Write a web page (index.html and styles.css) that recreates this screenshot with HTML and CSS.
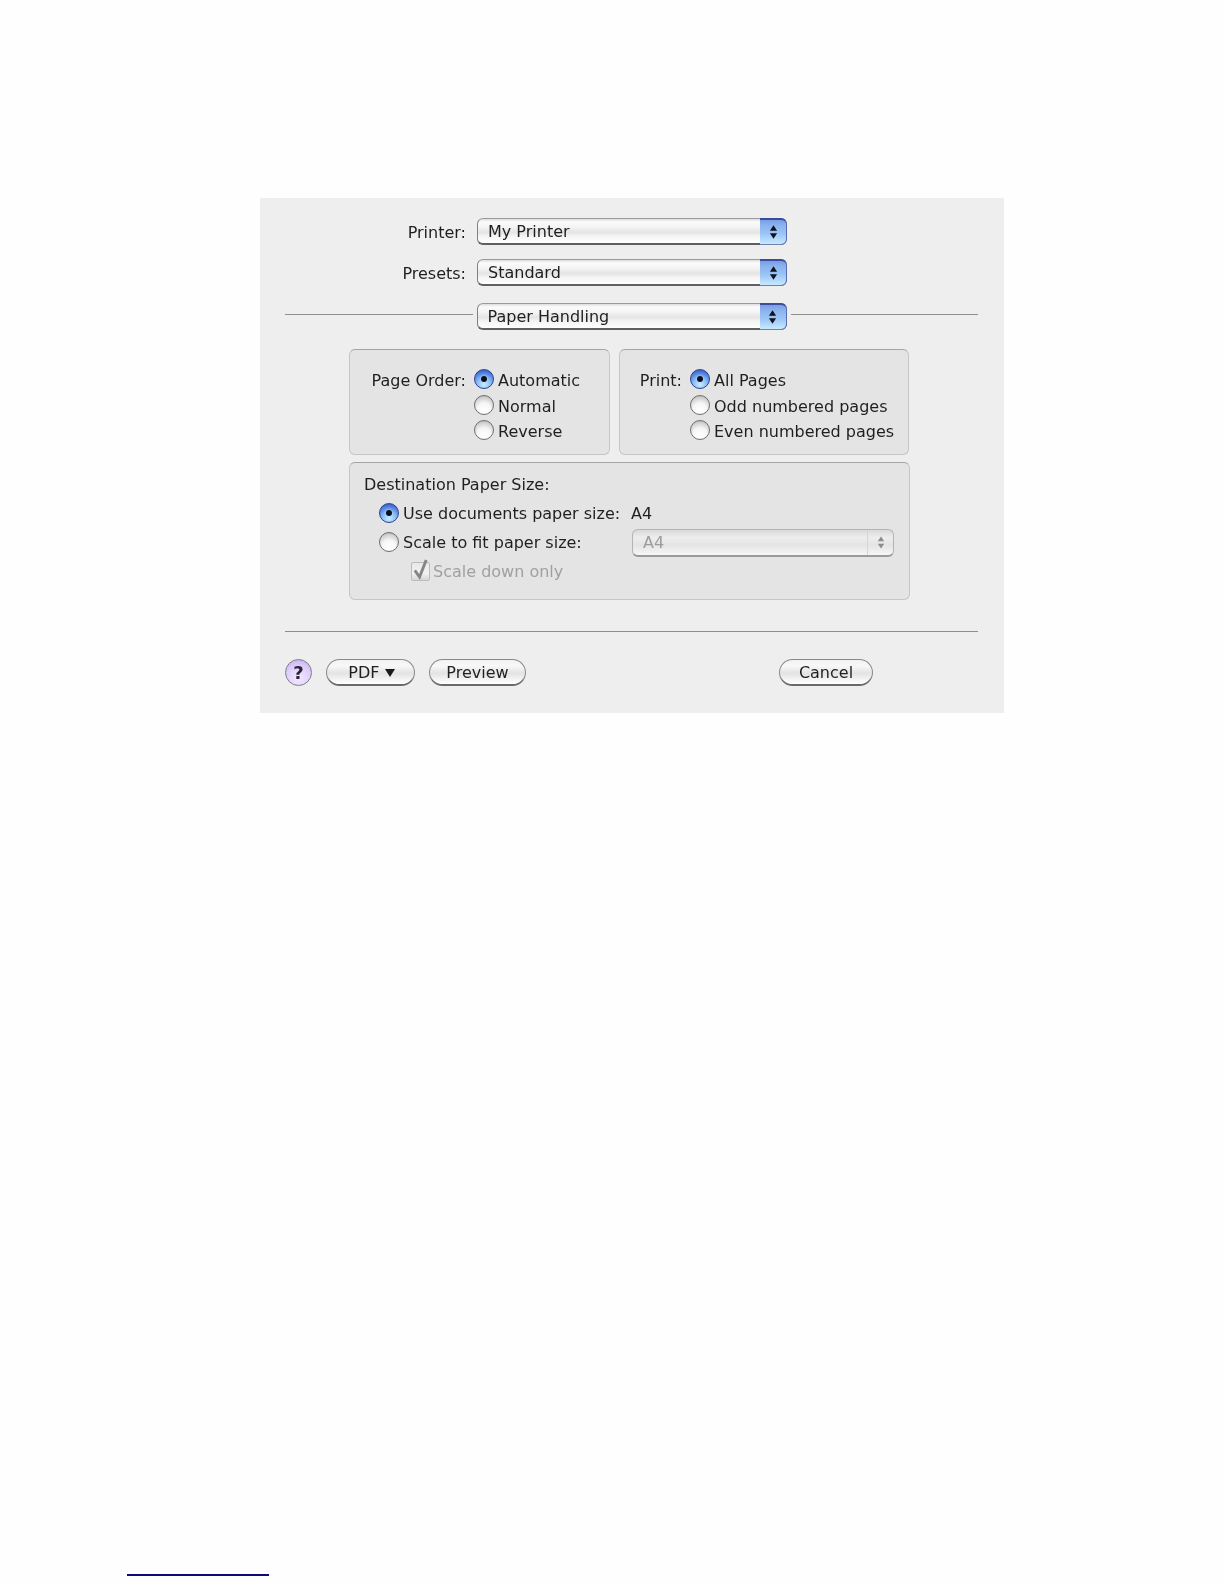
FILE: index.html
```html
<!DOCTYPE html>
<html lang="en">
<head>
<meta charset="utf-8">
<title>Print dialog</title>
<link rel="stylesheet" href="styles.css">
</head>
<body>
<main class="page">
  <section class="dialog">
    <div class="field">
      <span class="field-label">Printer:</span>
      <div class="popup"><span class="popup-text">My Printer</span><span class="stepper"><svg class="arrows" viewBox="0 0 10 16"><path d="M5 0.5 9 6.5H1zM5 15.5 1 9.5H9z"/></svg></span></div>
    </div>
    <div class="field field-second">
      <span class="field-label">Presets:</span>
      <div class="popup"><span class="popup-text">Standard</span><span class="stepper"><svg class="arrows" viewBox="0 0 10 16"><path d="M5 0.5 9 6.5H1zM5 15.5 1 9.5H9z"/></svg></span></div>
    </div>
    <div class="pane-row">
      <div class="rule rule-pane"></div>
      <div class="popup"><span class="popup-text">Paper Handling</span><span class="stepper"><svg class="arrows" viewBox="0 0 10 16"><path d="M5 0.5 9 6.5H1zM5 15.5 1 9.5H9z"/></svg></span></div>
      <div class="rule rule-pane"></div>
    </div>

    <div class="groups">
      <div class="group-row">
        <div class="group group-order">
          <span class="group-label">Page Order:</span>
          <div class="radios">
            <div class="radio-row"><span class="radio on"></span>Automatic</div>
            <div class="radio-row"><span class="radio"></span>Normal</div>
            <div class="radio-row"><span class="radio"></span>Reverse</div>
          </div>
        </div>
        <div class="group group-print">
          <span class="group-label">Print:</span>
          <div class="radios">
            <div class="radio-row"><span class="radio on"></span>All Pages</div>
            <div class="radio-row"><span class="radio"></span>Odd numbered pages</div>
            <div class="radio-row"><span class="radio"></span>Even numbered pages</div>
          </div>
        </div>
      </div>
      <div class="group group-dest">
        <div class="dest-title">Destination Paper Size:</div>
        <div class="dest-row dest-first">
          <span class="radio on"></span><span class="dest-label">Use documents paper size:</span><span class="dest-value">A4</span>
        </div>
        <div class="dest-row dest-second">
          <span class="radio"></span><span class="dest-label">Scale to fit paper size:</span>
          <div class="popup popup-off"><span class="popup-text">A4</span><span class="stepper stepper-off"><svg class="arrows arrows-off" viewBox="0 0 10 16"><path d="M5 0.5 9 6.5H1zM5 15.5 1 9.5H9z"/></svg></span></div>
        </div>
        <div class="check-row">
          <span class="check"><svg class="tick" viewBox="0 0 20 24"><path d="M4 13 9 20 16 2" /></svg></span>Scale down only
        </div>
      </div>
    </div>

    <div class="rule rule-bottom"></div>

    <div class="actions">
      <span class="help">?</span>
      <button class="btn btn-pdf" type="button">PDF <span class="pdf-arrow"></span></button>
      <button class="btn btn-preview" type="button">Preview</button>
      <button class="btn btn-cancel" type="button">Cancel</button>
    </div>
  </section>
  <div class="footnote-rule"></div>
</main>
</body>
</html>
```
FILE: styles.css
```css
* { box-sizing: border-box; }
html, body { margin: 0; padding: 0; background: #fefefe; }
body { font-family: "DejaVu Sans", "Liberation Sans", sans-serif; font-size: 16px; color: #1f1f1f; }

.page { height: 1584px; padding-top: 198px; position: relative; overflow: hidden; display: flex; flex-direction: column; }

.dialog {
  width: 744px; height: 515px; margin-left: 260px;
  padding: 20px 26px 0 25px;
  background: #eeeeee;
  filter: blur(0.6px);
}

.field { display: flex; align-items: center; gap: 12px; height: 27px; }
.field-second { margin-top: 14px; }
.field-label { width: 181px; text-align: right; padding-top: 2px; }
.field .popup { margin-left: -1px; }

.popup {
  width: 310px; height: 27px; flex: none;
  display: flex; align-items: stretch;
  border: 1px solid #9a9a9a; border-left-color: #808080; border-bottom: 2px solid #606060; border-radius: 6px;
  background: linear-gradient(#dcdcdc 0, #fbfbfb 12%, #f3f3f3 35%, #e4e4e4 55%, #f4f4f4 72%, #ffffff 100%);
}
.popup-text { flex: 1; padding-left: 10px; line-height: 25px; }
.stepper {
  width: 27px; flex: none; display: flex; align-items: center; justify-content: center;
  margin: -1px -1px -2px 0;
  background: linear-gradient(#7b9ee4 0, #8db4ee 25%, #97c4f6 55%, #c8e8ff 100%);
  border: 1px solid #5a6cb4; border-top: 2px solid #3c4c9c; border-left: 0; border-bottom-color: #6f7fae;
  border-radius: 0 6px 6px 0;
}
.arrows { width: 9px; height: 16px; fill: #10131f; }

.pane-row { display: flex; align-items: center; gap: 4px; height: 27px; margin-top: 17px; }
.rule { flex: 1; height: 1px; background: #8e8e8e; }
.rule-pane { margin-bottom: 5px; }

.groups { margin: 19px 0 0 64px; display: flex; flex-direction: column; gap: 7px; }
.group-row { display: flex; gap: 9px; }
.group {
  border: 1px solid #c6c6c6; border-top-color: #a4a4a4; border-radius: 6px;
  background: #e4e4e4;
}
.group-order, .group-print { height: 106px; display: flex; padding-top: 18px; gap: 8px; }
.group-order { width: 261px; }
.group-print { width: 290px; }
.group-order .group-label { width: 116px; }
.group-print .group-label { width: 62px; }
.group-label { text-align: right; line-height: 26px; flex: none; }

.radios { display: flex; flex-direction: column; }
.radio-row { height: 25.4px; display: flex; align-items: center; gap: 4px; }
.radio-row .radio { margin-bottom: 3px; }

.radio {
  width: 20px; height: 20px; flex: none; border-radius: 50%;
  border: 1px solid #6e6e6e;
  background: radial-gradient(circle at 50% 78%, #ffffff 0, #f6f6f6 42%, #d2d2d2 72%, #a8a8a8 100%);
  position: relative;
}
.radio.on {
  border-color: #2e3f96;
  background: radial-gradient(circle at 50% 82%, #c8eeff 0, #85baf4 42%, #4573d8 76%, #2b48aa 100%);
}
.radio.on::after {
  content: ""; position: absolute; left: 6px; top: 6px; width: 6px; height: 6px;
  border-radius: 50%; background: #0a0f22;
  box-shadow: 0 0 2px #d8e8ff;
}

.group-dest { width: 561px; height: 138px; padding: 12px 0 0 14px; }
.dest-title { line-height: 20px; }
.dest-row { display: flex; align-items: center; }
.dest-row .radio { margin-left: 15px; margin-right: 4px; }
.dest-first { height: 20px; margin-top: 8px; }
.dest-second { height: 28px; margin-top: 5px; }
.dest-label { white-space: nowrap; }
.dest-first .dest-label { width: 228px; }
.dest-second .dest-label { width: 229px; }
.dest-value { color: #1f1f1f; }

.popup-off {
  width: 262px; height: 28px; margin-top: 2px;
  border-color: #b4b4b4; border-bottom-color: #9a9a9a;
  background: linear-gradient(#dadada 0, #ededed 30%, #e4e4e4 60%, #f6f6f6 100%);
  color: #9c9c9c;
}
.popup-off .popup-text { line-height: 25px; }
.stepper-off { background: none; border: 0; border-left: 1px solid #d4d4d4; width: 26px; margin: 0; }
.arrows-off { width: 8px; height: 15px; fill: #8c8c8c; }

.check-row {
  display: flex; align-items: center; gap: 3px; height: 22px; margin: 4px 0 0 47px;
  color: #a0a0a0;
}
.check {
  width: 19px; height: 19px; flex: none; position: relative;
  border: 1px solid #bcbcbc; border-radius: 2px;
  background: linear-gradient(#e8e8e8, #f2f2f2 60%, #d6d6d6);
}
.tick {
  position: absolute; left: -1px; top: -5px; width: 19px; height: 23px;
  fill: none; stroke: #858585; stroke-width: 3;
}

.rule-bottom { flex: none; margin-top: 31px; }

.actions { display: flex; align-items: center; height: 27px; margin-top: 27px; }
.help {
  width: 27px; height: 27px; flex: none; border-radius: 50%;
  border: 1px solid #7d7d8a;
  background: radial-gradient(circle at 50% 75%, #f4e8ff 0, #dccbfa 60%, #bca8e8 100%);
  display: flex; align-items: center; justify-content: center;
  font-weight: 700; font-size: 18px; color: #2a2436;
}
.btn {
  height: 27px; flex: none; padding: 1px 0 0; margin: 0;
  font: inherit; color: #1f1f1f;
  border: 1px solid #8a8a8a; border-bottom: 2px solid #6a6a6a; border-radius: 14px;
  background: linear-gradient(#f2f2f2 0, #f8f8f8 25%, #e3e3e3 55%, #f2f2f2 78%, #ffffff 100%);
}
.btn-pdf { width: 89px; margin-left: 14px; padding-left: 2px; }
.btn-preview { width: 97px; margin-left: 14px; }
.btn-cancel { width: 94px; margin-left: 253px; }
.pdf-arrow {
  display: inline-block; width: 0; height: 0; vertical-align: 1px;
  border-left: 5px solid transparent; border-right: 5px solid transparent; border-top: 8px solid #1a1a1a;
}

.footnote-rule { position: absolute; left: 127px; top: 1574px; width: 142px; height: 2px; background: #0b0b7a; }
```
